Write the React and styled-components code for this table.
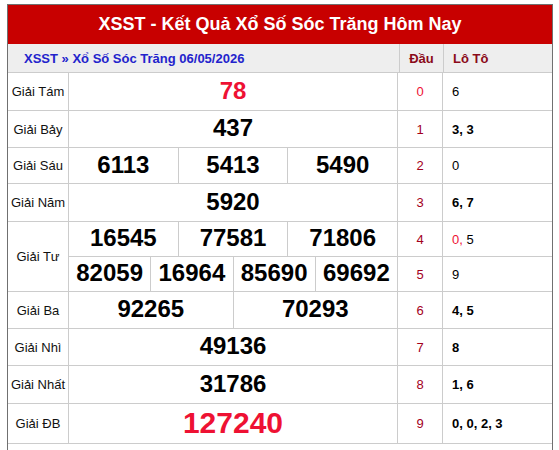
import React from 'react';
import styled, { createGlobalStyle } from 'styled-components';

const GlobalStyle = createGlobalStyle`
  body {
    margin: 0;
    background: #fff;
    font-family: "Liberation Sans", Arial, sans-serif;
  }
`;

const RED = '#c80000';
const PINK = '#ee1133';
const LINE = '#cccccc';

const Box = styled.div`
  margin: 4px 0 0 7px;
  width: 544px;
  border: 1px solid #707070;
  padding-bottom: 20px;
`;

const Title = styled.h2`
  margin: 0;
  height: 39px;
  line-height: 39px;
  background: ${RED};
  color: #fff;
  font-size: 18px;
  font-weight: bold;
  text-align: center;
`;

const SubBar = styled.div`
  display: grid;
  grid-template-columns: 391px 43px 1fr;
  column-gap: 1px;
  background: ${LINE};
  border-bottom: 1px solid ${LINE};
  height: 28px;
`;

const SubCell = styled.div`
  background: #eeeeee;
  display: flex;
  align-items: center;
  justify-content: ${p => (p.$center ? 'center' : 'flex-start')};
  padding-left: ${p => (p.$pad || 0)}px;
  font-size: 13px;
  font-weight: bold;
  color: ${p => p.$color || '#8b0a1a'};
`;

const Body = styled.div`
  display: grid;
  grid-template-columns: 60px 328px 44px 1fr;
  grid-template-rows: 37px 36px 35px 37px 34px 34px 36px 36px 37px 39px;
  gap: 1px;
  background: ${LINE};
  border-bottom: 1px solid ${LINE};
`;

const Label = styled.div`
  background: #fff;
  display: flex;
  align-items: center;
  justify-content: center;
  font-size: 13px;
  color: #111;
  grid-row: ${p => p.$span ? `span ${p.$span}` : 'auto'};
`;

const NumRow = styled.div`
  display: flex;
  gap: 1px;
  background: ${LINE};
`;

const Num = styled.div`
  flex: 1;
  background: #fff;
  display: flex;
  align-items: center;
  justify-content: center;
  font-weight: bold;
  font-size: ${p => (p.$big ? 30 : 24)}px;
  color: ${p => (p.$red ? PINK : '#000')};
  padding-bottom: 2px;
`;

const Head = styled.div`
  background: #fff;
  display: flex;
  align-items: center;
  justify-content: center;
  font-size: 13px;
  color: ${p => (p.$hot ? PINK : '#a3001c')};
`;

const Loto = styled.div`
  background: #fff;
  display: flex;
  align-items: center;
  padding-left: 9px;
  font-size: 13px;
  font-weight: ${p => (p.$bold ? 'bold' : 'normal')};
  color: #000;
  white-space: pre;
`;

const Hot = styled.span`
  color: ${PINK};
`;

const prizes = [
  { label: 'Giải Tám', rows: [['78']], red: true },
  { label: 'Giải Bảy', rows: [['437']] },
  { label: 'Giải Sáu', rows: [['6113', '5413', '5490']] },
  { label: 'Giải Năm', rows: [['5920']] },
  { label: 'Giải Tư', rows: [['16545', '77581', '71806'], ['82059', '16964', '85690', '69692']] },
  { label: 'Giải Ba', rows: [['92265', '70293']] },
  { label: 'Giải Nhì', rows: [['49136']] },
  { label: 'Giải Nhất', rows: [['31786']] },
  { label: 'Giải ĐB', rows: [['127240']], red: true, big: true },
];

const lotos = [
  { v: '6' },
  { v: '3, 3', bold: true },
  { v: '0' },
  { v: '6, 7', bold: true },
  { v: <><Hot>0,</Hot>{' 5'}</> },
  { v: '9' },
  { v: '4, 5', bold: true },
  { v: '8', bold: true },
  { v: '1, 6', bold: true },
  { v: '0, 0, 2, 3', bold: true },
];

export default function App() {
  let line = 0;
  const cells = [];
  prizes.forEach(p => {
    cells.push(
      <Label key={p.label} $span={p.rows.length} style={{ gridColumn: 1 }}>{p.label}</Label>
    );
    p.rows.forEach((r, i) => {
      const row = line + 1;
      cells.push(
        <NumRow key={p.label + i} style={{ gridColumn: 2, gridRow: row }}>
          {r.map(n => <Num key={n} $red={p.red} $big={p.big}>{n}</Num>)}
        </NumRow>
      );
      cells.push(<Head key={'h' + line} $hot={line === 0} style={{ gridColumn: 3, gridRow: row }}>{line}</Head>);
      cells.push(<Loto key={'l' + line} $bold={lotos[line].bold} style={{ gridColumn: 4, gridRow: row }}>{lotos[line].v}</Loto>);
      line++;
    });
  });

  return (
    <>
      <GlobalStyle />
      <Box>
        <Title>XSST - Kết Quả Xổ Số Sóc Trăng Hôm Nay</Title>
        <SubBar>
          <SubCell $pad={16} $color="#2323cc">XSST » Xổ Số Sóc Trăng 06/05/2026</SubCell>
          <SubCell $center>Đầu</SubCell>
          <SubCell $pad={9}>Lô Tô</SubCell>
        </SubBar>
        <Body>{cells}</Body>
      </Box>
    </>
  );
}
